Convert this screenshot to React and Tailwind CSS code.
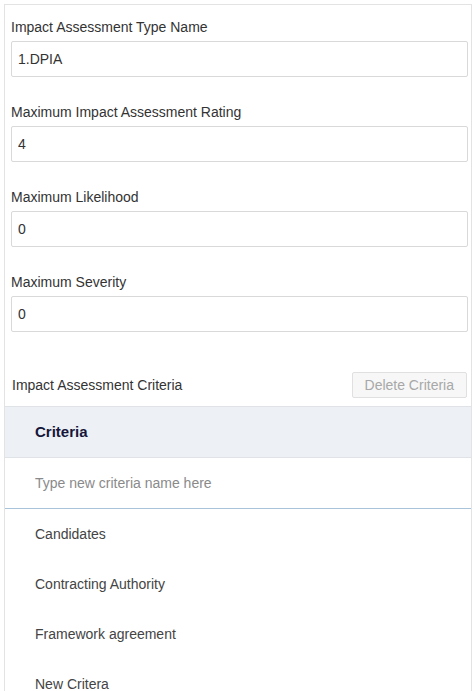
import React from "react";

const FIELDS = [
  { label: "Impact Assessment Type Name", value: "1.DPIA" },
  { label: "Maximum Impact Assessment Rating", value: "4" },
  { label: "Maximum Likelihood", value: "0" },
  { label: "Maximum Severity", value: "0" },
];

const CRITERIA = ["Candidates", "Contracting Authority", "Framework agreement", "New Critera"];

function Field({ label, value }) {
  return (
    <div className="flex flex-col">
      <label className="h-[16px] leading-[16px] text-[14px] text-[#333]">{label}</label>
      <input
        className="mt-[6px] h-[36px] w-full rounded-[2px] border border-[#d9d9d9] bg-white px-[6px] text-[14px] text-[#333] outline-none"
        defaultValue={value}
        readOnly
      />
    </div>
  );
}

export default function App() {
  return (
    <div className="h-[691px] overflow-hidden bg-white pl-[4px] pr-[2px] pt-[4px] font-[family-name:Liberation_Sans,Arial,sans-serif]">
      <div className="h-full border-l border-r border-t border-[#e3e3e3]">
        <div className="flex flex-col gap-[27px] pl-[6px] pr-[3px] pt-[14px]">
          {FIELDS.map((f) => (
            <Field key={f.label} {...f} />
          ))}
        </div>

        <div className="mt-[40px] flex items-center justify-between pl-[7px] pr-[4px]">
          <span className="text-[14px] text-[#333]">Impact Assessment Criteria</span>
          <button
            className="h-[26px] rounded-[2px] border border-[#e0e0e0] bg-[#f7f7f7] px-[12px] text-[14px] text-[#a8a8a8]"
            disabled
          >
            Delete Criteria
          </button>
        </div>

        <div className="mt-[8px]">
          <div className="flex h-[52px] items-center border-y border-[#dfe3e8] bg-[#edf1f5] pl-[30px] text-[15px] font-bold text-[#16163a]">
            Criteria
          </div>
          <div className="flex h-[51px] items-center border-b border-[#a9c3da] pl-[30px]">
            <input
              className="w-full bg-transparent text-[14px] text-[#333] outline-none placeholder:text-[#8a8a8a]"
              placeholder="Type new criteria name here"
            />
          </div>
          {CRITERIA.map((c) => (
            <div key={c} className="flex h-[50px] items-center pl-[30px] text-[14px] text-[#444]">
              {c}
            </div>
          ))}
        </div>
      </div>
    </div>
  );
}
